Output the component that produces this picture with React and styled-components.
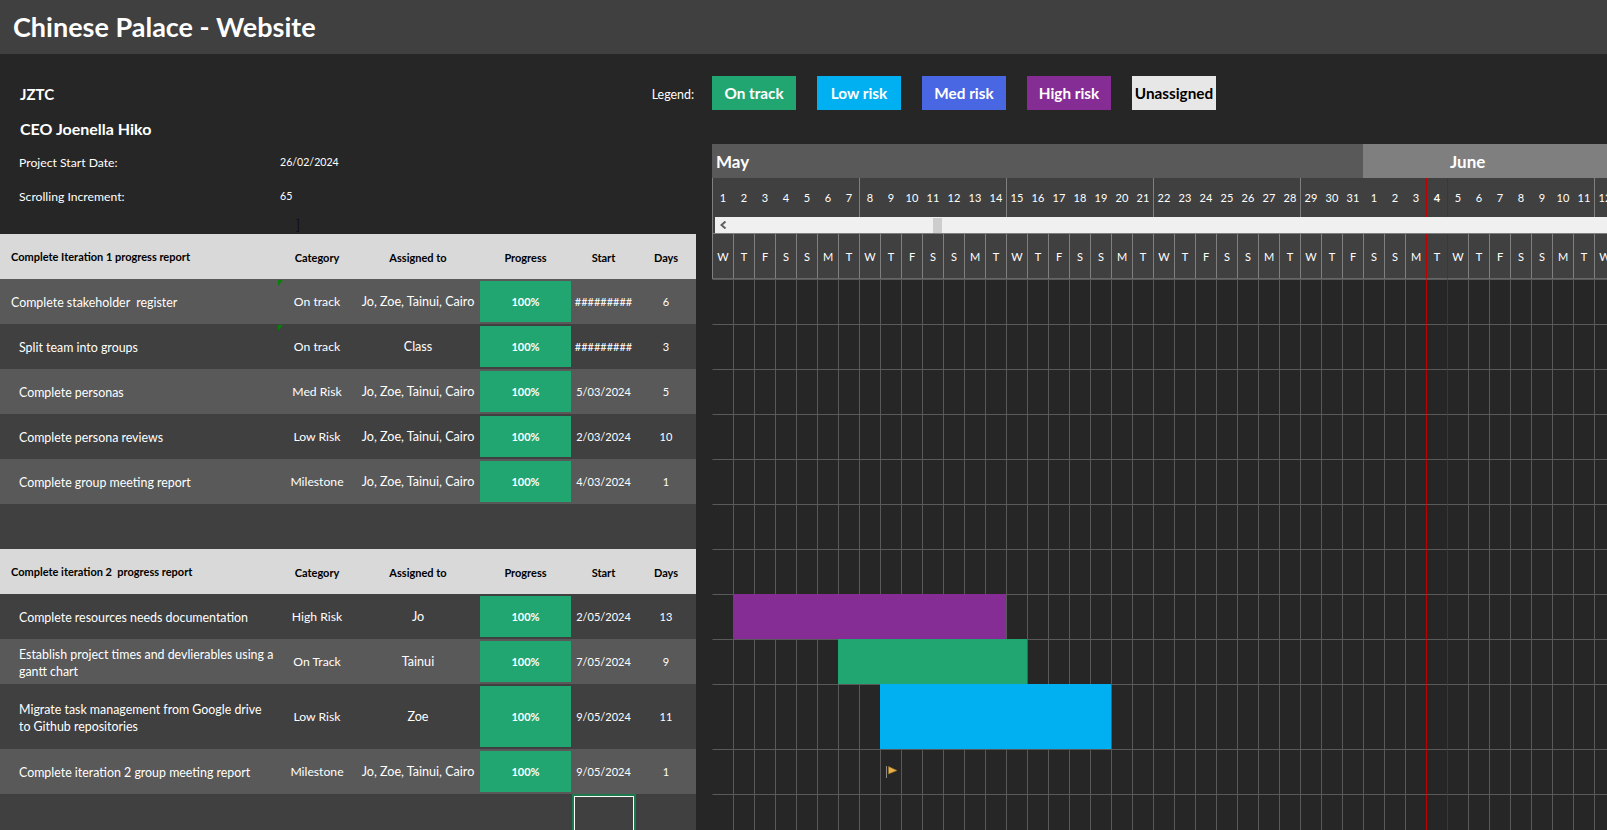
import React from "react";
import styled, { createGlobalStyle } from "styled-components";

const GlobalStyle = createGlobalStyle`
  html, body {
    margin: 0;
    height: 100%;
    overflow: hidden;
    background: #262626;
    font-family: Lato, "Open Sans", sans-serif;
    color: #fff;
  }
`;

const COLORS = {
  track: "#21a671",
  low: "#00b0f0",
  med: "#4a67e3",
  high: "#862d95",
  none: "#e7e7e7",
};

const COL_W = 21;
const COL_COUNT = 43;
const TODAY = 34;
const WEEK = ["W", "T", "F", "S", "S", "M", "T"];

const days = Array.from({ length: COL_COUNT }, (_, i) => ({
  num: i < 31 ? i + 1 : i - 30,
  letter: WEEK[i % 7],
}));

const legend = [
  { label: "On track", bg: COLORS.track },
  { label: "Low risk", bg: COLORS.low },
  { label: "Med risk", bg: COLORS.med },
  { label: "High risk", bg: COLORS.high },
  { label: "Unassigned", bg: COLORS.none, dark: true },
];

const TEAM = "Jo, Zoe, Tainui, Cairo";

const rows = [
  { kind: "head", name: "Complete Iteration 1 progress report" },
  { name: "Complete stakeholder  register", flush: true, cat: "On track", who: TEAM, start: "#########", n: 6, alt: true, mark: true },
  { name: "Split team into groups", cat: "On track", who: "Class", start: "#########", n: 3, mark: true },
  { name: "Complete personas", cat: "Med Risk", who: TEAM, start: "5/03/2024", n: 5, alt: true },
  { name: "Complete persona reviews", cat: "Low Risk", who: TEAM, start: "2/03/2024", n: 10 },
  { name: "Complete group meeting report", cat: "Milestone", who: TEAM, start: "4/03/2024", n: 1, alt: true },
  { kind: "gap" },
  { kind: "head", name: "Complete iteration 2  progress report" },
  { name: "Complete resources needs documentation", cat: "High Risk", who: "Jo", start: "2/05/2024", n: 13, bar: { from: 1, color: COLORS.high } },
  { name: "Establish project times and devlierables using a gantt chart", cat: "On Track", who: "Tainui", start: "7/05/2024", n: 9, alt: true, bar: { from: 6, color: COLORS.track } },
  { name: "Migrate task management from Google drive to Github repositories", cat: "Low Risk", who: "Zoe", start: "9/05/2024", n: 11, tall: true, bar: { from: 8, color: COLORS.low } },
  { name: "Complete iteration 2 group meeting report", cat: "Milestone", who: TEAM, start: "9/05/2024", n: 1, alt: true, flag: 8 },
];

const Page = styled.div`
  width: 1607px;
  height: 830px;
  overflow: hidden;
  background: #262626;
`;

const TitleBar = styled.header`
  height: 54px;
  box-sizing: border-box;
  background: #404040;
  display: flex;
  align-items: center;
  padding: 0 0 2px 13px;
`;

const Title = styled.h1`
  margin: 0;
  font-size: 27px;
  font-weight: 700;
`;

const Body = styled.div`
  display: flex;
  gap: 16px;
  height: 776px;
`;

const LeftPane = styled.section`
  width: 696px;
  flex: none;
  display: flex;
  flex-direction: column;
`;

const Info = styled.div`
  height: 180px;
  box-sizing: border-box;
  padding-top: 23px;
  position: relative;
`;

const InfoRow = styled.div`
  height: 34px;
  display: flex;
  align-items: center;
  justify-content: space-between;
  padding: 0 2px 0 20px;
`;

const Strong = styled.strong`
  font-size: ${(p) => p.$size}px;
  font-weight: 700;
`;

const FieldRow = styled.div`
  height: 34px;
  display: grid;
  grid-template-columns: 261px 1fr;
  align-items: center;
  padding-left: 19px;
  font-size: 12.2px;
`;

const FieldValue = styled.span`
  font-size: 10.6px;
`;

const LegendLabel = styled.span`
  font-size: 12.4px;
`;

const Beam = styled.span`
  position: absolute;
  left: 296px;
  top: 163px;
  font-size: 13px;
  color: #0d0d1d;
`;

const Table = styled.div`
  flex: 1;
  background: #404040;
`;

const Row = styled.div`
  display: grid;
  grid-template-columns: 278px 78px 124px 91px 65px 60px;
  height: ${(p) => p.$h}px;
  align-items: center;
  text-align: center;
  font-size: 11px;
  background: ${(p) => (p.$head ? "#d9d9d9" : p.$alt ? "#595959" : "#404040")};
  color: ${(p) => (p.$head ? "#000" : "#fff")};
  font-weight: ${(p) => (p.$head ? 700 : 400)};
`;

const Name = styled.div`
  text-align: left;
  font-size: 12.4px;
  line-height: 17px;
  white-space: pre-wrap;
  padding: 2px 3px 0 ${(p) => (p.$flush ? 11 : 19)}px;
`;

const HeadName = styled.div`
  text-align: left;
  padding: 0 0 1px 11px;
  white-space: pre;
`;

const HeadLabel = styled.div`
  padding-top: 1px;
`;

const Cat = styled.div`
  position: relative;
  align-self: stretch;
  display: flex;
  align-items: center;
  justify-content: center;
  font-size: 12.2px;
`;

const Who = styled.div`
  font-size: 12.6px;
  white-space: nowrap;
`;

const Mark = styled.i`
  position: absolute;
  left: 0;
  top: 1px;
  border-top: 6px solid #0a7d0a;
  border-right: 5px solid transparent;
`;

const Progress = styled.div`
  align-self: stretch;
  margin: 2px 0;
  background: ${COLORS.track};
  font-weight: 700;
  display: flex;
  align-items: center;
  justify-content: center;
`;

const Rest = styled.div`
  height: 36px;
  display: grid;
  grid-template-columns: 572px 64px;
`;

const Selected = styled.div`
  grid-column: 2;
  box-sizing: border-box;
  height: 50px;
  border: 2px solid #1c7a4c;
  box-shadow: inset 0 0 0 1px #fff;
`;

const RightPane = styled.section`
  flex: 1;
  min-width: 0;
  padding-top: 22px;
  overflow: hidden;
`;

const Legend = styled.div`
  display: flex;
  gap: 21px;
  margin-bottom: 34px;
`;

const Chip = styled.div`
  width: 84px;
  height: 34px;
  display: flex;
  align-items: center;
  justify-content: center;
  font-size: 15.3px;
  font-weight: 700;
  background: ${(p) => p.$bg};
  color: ${(p) => (p.$dark ? "#000" : "#fff")};
`;

const Months = styled.div`
  display: grid;
  grid-template-columns: ${COL_W * 31}px 1fr;
  height: 34px;
`;

const Month = styled.div`
  background: ${(p) => p.$bg};
  font-size: 17px;
  font-weight: 700;
  display: flex;
  align-items: center;
  padding-left: ${(p) => p.$pad}px;
`;

const Strip = styled.div`
  display: grid;
  grid-template-columns: repeat(${COL_COUNT}, ${COL_W}px);
  height: ${(p) => p.$h}px;
`;

// the day marker is drawn by the left edge of today and of the day after it
const isTodayEdge = (i) => i === TODAY || i === TODAY + 1;

const NumCell = styled.div`
  background: #404040;
  font-size: 11px;
  display: flex;
  align-items: center;
  justify-content: center;
  box-sizing: border-box;
  font-weight: ${(p) => (p.$bold ? 700 : 400)};
  border-left: 1px solid
    ${(p) => (p.$red ? "#c00000" : p.$week ? "#7f7f7f" : "transparent")};
`;

const WeekCell = styled.div`
  background: #404040;
  font-size: 11px;
  display: flex;
  align-items: center;
  justify-content: center;
  box-sizing: border-box;
  border-left: 1px solid ${(p) => (p.$red ? "#c00000" : "#7f7f7f")};
  border-bottom: 1px solid #666;
`;

const ScrollTrack = styled.div`
  height: 17px;
  box-sizing: border-box;
  background: #404040;
  padding-left: 2px;
  border-left: 1px solid #7f7f7f;
  border-bottom: 1px solid #7f7f7f;
`;

const ScrollInner = styled.div`
  height: 16px;
  background: #f0f0f0;
  display: flex;
  align-items: center;
  padding-left: 5px;
  position: relative;
`;

const Thumb = styled.div`
  position: absolute;
  left: 218px;
  top: 1px;
  width: 9px;
  height: 15px;
  background: #cdcdcd;
`;

const GridRow = styled.div`
  display: grid;
  grid-template-columns: repeat(${COL_COUNT}, ${COL_W}px);
  grid-template-rows: 1fr;
  height: ${(p) => p.$h}px;
`;

const GridCell = styled.div`
  grid-row: 1;
  grid-column: ${(p) => p.$col};
  box-sizing: border-box;
  border-top: 1px solid #595959;
  border-left: 1px solid
    ${(p) => (p.$first ? "transparent" : p.$red ? "#c00000" : "#595959")};
`;

const Bar = styled.div`
  grid-row: 1;
  grid-column: ${(p) => p.$from + 1} / span ${(p) => p.$span};
  background: ${(p) => p.$color};
  z-index: 1;
`;

const FlagSlot = styled.div`
  grid-row: 1;
  grid-column: ${(p) => p.$from + 1};
  z-index: 1;
  padding: 17px 0 0 6px;
`;

function Flag() {
  return (
    <svg width="11" height="13" viewBox="0 0 11 13" style={{ display: "block" }}>
      <path d="M0.5 0V12" stroke="#8a8a8a" strokeWidth="1" />
      <path d="M2.5 0.5L11 4.5L2.5 8Z" fill="#e8b04a" stroke="#9a7026" strokeWidth="0.6" />
    </svg>
  );
}

function ChevronLeft() {
  return (
    <svg width="7" height="8" viewBox="0 0 7 8" style={{ display: "block" }}>
      <path d="M5.5 0.5L1.5 4L5.5 7.5" fill="none" stroke="#606060" strokeWidth="2" />
    </svg>
  );
}

function GanttRow({ h, row }) {
  return (
    <GridRow $h={h}>
      {days.map((_, i) => (
        <GridCell key={i} $col={i + 1} $first={i === 0} $red={isTodayEdge(i)} />
      ))}
      {row?.bar && <Bar $from={row.bar.from} $span={row.n} $color={row.bar.color} />}
      {row?.flag != null && (
        <FlagSlot $from={row.flag}>
          <Flag />
        </FlagSlot>
      )}
    </GridRow>
  );
}

const rowHeight = (r) => (r.tall ? 65 : 45);

export default function App() {
  return (
    <Page>
      <GlobalStyle />
      <TitleBar>
        <Title>Chinese Palace - Website</Title>
      </TitleBar>
      <Body>
        <LeftPane>
          <Info>
            <InfoRow>
              <Strong $size={15}>JZTC</Strong>
              <LegendLabel>Legend:</LegendLabel>
            </InfoRow>
            <InfoRow>
              <Strong $size={16}>CEO Joenella Hiko</Strong>
            </InfoRow>
            <FieldRow>
              <span>Project Start Date:</span>
              <FieldValue>26/02/2024</FieldValue>
            </FieldRow>
            <FieldRow>
              <span>Scrolling Increment:</span>
              <FieldValue>65</FieldValue>
            </FieldRow>
            <Beam>]</Beam>
          </Info>
          <Table>
            {rows.map((r, i) => {
              if (r.kind === "gap") return <Row key={i} $h={45} />;
              if (r.kind === "head") {
                return (
                  <Row key={i} $h={45} $head>
                    <HeadName>{r.name}</HeadName>
                    <HeadLabel>Category</HeadLabel>
                    <HeadLabel>Assigned to</HeadLabel>
                    <HeadLabel>Progress</HeadLabel>
                    <HeadLabel>Start</HeadLabel>
                    <HeadLabel>Days</HeadLabel>
                  </Row>
                );
              }
              return (
                <Row key={i} $h={rowHeight(r)} $alt={r.alt}>
                  <Name $flush={r.flush}>{r.name}</Name>
                  <Cat>
                    {r.mark && <Mark />}
                    {r.cat}
                  </Cat>
                  <Who>{r.who}</Who>
                  <Progress>100%</Progress>
                  <div>{r.start}</div>
                  <div>{r.n}</div>
                </Row>
              );
            })}
            <Rest>
              <Selected />
            </Rest>
          </Table>
        </LeftPane>
        <RightPane>
          <Legend>
            {legend.map((l) => (
              <Chip key={l.label} $bg={l.bg} $dark={l.dark}>
                {l.label}
              </Chip>
            ))}
          </Legend>
          <Months>
            <Month $bg="#595959" $pad={4}>May</Month>
            <Month $bg="#7f7f7f" $pad={87}>June</Month>
          </Months>
          <Strip $h={39}>
            {days.map((d, i) => (
              <NumCell key={i} $week={i % 7 === 0} $red={isTodayEdge(i)} $bold={i === TODAY}>
                {d.num}
              </NumCell>
            ))}
          </Strip>
          <ScrollTrack>
            <ScrollInner>
              <ChevronLeft />
              <Thumb />
            </ScrollInner>
          </ScrollTrack>
          <Strip $h={45}>
            {days.map((d, i) => (
              <WeekCell key={i} $red={isTodayEdge(i)}>
                {d.letter}
              </WeekCell>
            ))}
          </Strip>
          {rows.slice(1).map((r, i) => (
            <GanttRow key={i} h={r.kind ? 45 : rowHeight(r)} row={r} />
          ))}
          <GanttRow h={36} />
        </RightPane>
      </Body>
    </Page>
  );
}
